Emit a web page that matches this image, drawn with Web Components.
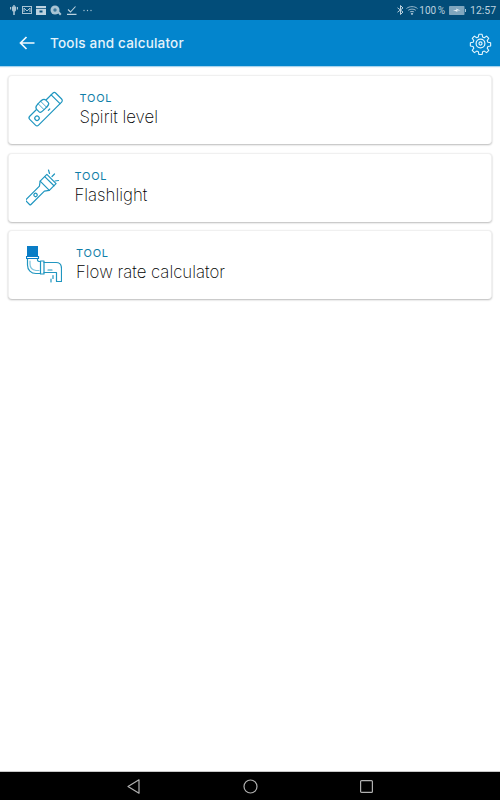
<!DOCTYPE html>
<html><head><meta charset="utf-8"><style>
html,body{margin:0;padding:0;height:100%;background:#fff;font-family:Inter,sans-serif}
body{width:500px;height:800px;overflow:hidden;display:flex;flex-direction:column}
</style></head><body>
<status-bar></status-bar>
<app-bar title="Tools and calculator"></app-bar>
<tool-list>
<tool-card name="Spirit level" gap="16.5" icon="level"></tool-card>
<tool-card name="Flashlight" gap="14.5" icon="torch"></tool-card>
<tool-card name="Flow rate calculator" gap="14" icon="pipe"></tool-card>
</tool-list>
<nav-bar></nav-bar>
<script>
const def=(n,html)=>customElements.define(n,class extends HTMLElement{connectedCallback(){if(this.shadowRoot)return;const s=this.attachShadow({mode:'open'});s.innerHTML=typeof html==='function'?html(this):html;}});
const C='#2096c0';
const icons={
level:`<svg width="37" height="40" viewBox="25 90 37 40" fill="none" stroke="${C}" stroke-width="1.200" stroke-linejoin="round" stroke-linecap="round"><g transform="translate(44.5 109) rotate(-45)"><rect x="-18.500" y="-6" width="37" height="12.500" rx="2.2"/><path d="M-6.500 -6 C-6.500 -8.800 -4 -9 0 -9 C4 -9 6.500 -8.800 6.500 -6 L6.500 -2.500 C6.500 -.5 4 -.5 0 -.5 C-4 -.5 -6.500 -.5 -6.500 -2.500 Z" fill="#fff"/><path d="M-1.500 -9V-.5M2 -9V-.5" stroke-width=".8"/><circle cx="-12.500" cy="0.500" r="2.200"/><path d="M14 -6V6.500M1 3H3"/></g></svg>`,
torch:`<svg width="34" height="40" viewBox="25 168 34 40" fill="none" stroke="${C}" stroke-width="1.200" stroke-linejoin="round" stroke-linecap="round"><g transform="translate(39.500 190) rotate(-45)"><path d="M-17 -3.500H2L6 -6.500H15.500V6.500H6L2 3.500H-17Q-18 3.500 -18 2.500V-2.500Q-18 -3.500 -17 -3.500Z"/><path d="M12.500 -6.500V6.500M6 -6.500V6.500"/><circle cx="-7" cy="0" r="1.700"/></g><path d="M47.500 170L48.500 173.500M53.500 174L51 176.500M57.500 180.500L54 181"/></svg>`,
pipe:`<svg width="36" height="40" viewBox="25 246 36 40" fill="none" stroke="${C}" stroke-width="1.200" stroke-linejoin="round" stroke-linecap="round"><rect x="26" y="247" width="11" height="10" fill="#0a7dc6" stroke="none"/><path d="M25.500 257.500H37.500V259.500H25.500Z" stroke="#0a7dc6"/><path d="M26.500 260V266C26.500 271 30 274.500 35 274.500H39M36.500 260V261C36.500 262 37.500 262.500 39 262.500"/><path d="M29 262V265C29 268.500 31.500 271 35 271.500H38" stroke="#7cc4dc"/><rect x="39.500" y="262" width="3.500" height="13"/><path d="M43 263.500H55M43 273.500H55M47 271H51"/><path d="M55 263.500C58.500 263.500 60.500 266 60.500 269.500V282.500H55.500V273.500"/><path d="M52 276.500V279.500M50 280V283"/></svg>`
};
def('status-bar',`<style>
:host{display:flex;flex:none;height:20px;background:#024d79;color:#bcd2df;font:10px Roboto,sans-serif;align-items:center;padding:0 3px 0 10px;justify-content:space-between}
.g{display:flex;align-items:center}
svg{display:block}
</style>
<div class="g" style="gap:4px">
<svg width="8" height="10" viewBox="0 0 8 10" fill="#a9c4d4"><path d="M3.300 0h1.400v1.500H6V5C6 6 5 6.500 4.800 6.500V10H3.200V6.500C3 6.500 2 6 2 5V1.500h1.300z M0 2h1.200v2.500H0zM6.800 2H8v2.500H6.800z"/></svg>
<svg width="10" height="8" viewBox="0 0 10 8" fill="none" stroke="#a9c4d4"><rect x=".5" y=".5" width="9" height="7"/><path d="M2 6V2L5 5 8 2V6"/></svg>
<svg width="10" height="9" viewBox="0 0 10 9" fill="#bcd2df"><path fill-rule="evenodd" d="M0 0h10v2H0zM0 2.800h10V9H0zM3.500 4.500v2h3v-2z"/></svg>
<svg width="12" height="11" viewBox="0 0 12 11" fill="#a9c4d4"><circle cx="5" cy="5" r="4.500"/><path d="M8 5l3.500 4-1.500 1.500L7 7z"/><circle cx="5" cy="5" r="1.700" fill="#3f7a9c"/></svg>
<svg width="10" height="9" viewBox="0 0 10 9" fill="none" stroke="#bcd2df" stroke-width="1.100" style="margin-left:1px"><path d="M1 3.500L3.500 6 8.500 .5M0 8.400h9.500"/></svg>
<svg width="9" height="3" viewBox="0 0 9 3" fill="#a9c4d4" style="margin-left:2px"><circle cx="1" cy="1.500" r=".7"/><circle cx="4.500" cy="1.500" r=".7"/><circle cx="8" cy="1.500" r=".7"/></svg>
</div>
<div class="g">
<svg width="7" height="10" viewBox="0 0 7 10" fill="none" stroke="#bcd2df" style="margin-right:2px"><path d="M.5 2.800L6 7 3.500 9.500V.5L6 3 .5 7.200"/></svg>
<svg width="12" height="9" viewBox="0 0 12 9" fill="none" stroke="#bcd2df" stroke-width=".8"><path d="M.5 2.500C3.500 0 8.500 0 11.500 2.500M2.200 4.300C4.300 2.700 7.700 2.700 9.800 4.300M3.900 6C5 5.200 7 5.200 8.100 6"/><circle cx="6" cy="7.800" r=".7" fill="#bcd2df"/></svg>
<span style="margin-left:1px;word-spacing:-1px">100 %</span>
<svg width="17" height="9" viewBox="0 0 17 9" style="margin-left:4px" fill="#a9c6d8"><rect width="15.500" height="9" rx=".8" fill="#7fa6be"/><rect x="16" y="3" width="1" height="3"/><path d="M4 4h3.500l-.5-1.500L11.500 4.500H8l.5 1.500z" fill="#e4eef4"/></svg>
<span style="margin-left:4px;font-size:10.500px;width:27px">12:57</span>
</div>`);
def('app-bar',h=>`<style>
:host{display:flex;flex:none;height:46px;background:#0385cd;color:#e4f3fb;align-items:center;box-shadow:0 1px 1px rgba(3,133,205,.35);position:relative}
.back{margin-left:19px;width:16px;height:14px;display:block}
.t{margin-left:15px;font:500 13.500px Inter,sans-serif;letter-spacing:.2px;flex:1}
.gear{margin-right:8px;display:block}
</style>
<svg class="back" viewBox="0 0 16 14" fill="none" stroke="#f2fafe" stroke-width="1.700"><path d="M15.500 7H1.500M7.500 1L1.500 7 7.500 13"/></svg>
<div class="t">${h.getAttribute('title')}</div>
<svg class="gear" width="23" height="23" viewBox="0 0 24 24" fill="none" stroke="#e6f6fd" stroke-width="1.250" stroke-linejoin="round"><path d="M10.200 1.500h3.600l.6 3.100 1.900.8 2.600-1.800 2.500 2.500-1.800 2.600.8 1.900 3.100.6v3.600l-3.100.6-.8 1.900 1.800 2.600-2.500 2.500-2.600-1.800-1.900.8-.6 3.100h-3.600l-.6-3.100-1.900-.8-2.600 1.800-2.500-2.500 1.800-2.600-.8-1.900-3.100-.6v-3.600l3.100-.6.8-1.900-1.800-2.600 2.500-2.500 2.600 1.800 1.900-.8z" transform="translate(12 12) scale(.92) translate(-12 -12)"/><circle cx="12" cy="12" r="4.600"/><circle cx="12" cy="12" r="1.600"/></svg>`);
def('tool-list',`<style>:host{display:flex;flex-direction:column;flex:1;gap:8.500px;padding:9px 8px 0}</style><slot></slot>`);
def('tool-card',h=>`<style>
:host{display:flex;height:69px;box-sizing:border-box;align-items:center;background:#fff;border-radius:4px;padding-left:17px;border:1px solid #f0f0f0;border-bottom:0;box-shadow:0 1px 2px rgba(0,0,0,.28)}
svg{display:block;flex:none}
.x{margin-left:${h.getAttribute('gap')}px}
.k{font:400 11px/13px Inter,sans-serif;color:#0f7ea8;letter-spacing:.75px}
.n{font:250 16.800px/22px Inter,sans-serif;color:#000;margin-top:1px}
</style>${icons[h.getAttribute('icon')]}<div class="x"><div class="k">TOOL</div><div class="n">${h.getAttribute('name')}</div></div>`);
def('nav-bar',`<style>
:host{display:flex;flex:none;height:28px;background:#000;border-top:1px solid #c8c8c8;align-items:center;justify-content:space-between;padding:0 127px}
svg{display:block}
</style>
<svg width="13" height="15" viewBox="0 0 13 15" fill="none" stroke="#b0b0b0" stroke-width="1.200" stroke-linejoin="round"><path d="M12 .8V14.200L1 7.500Z"/></svg>
<svg width="15" height="15" viewBox="0 0 15 15" fill="none" stroke="#b0b0b0" stroke-width="1.200"><circle cx="7.500" cy="7.500" r="6.500"/></svg>
<svg width="13" height="13" viewBox="0 0 13 13" fill="none" stroke="#b0b0b0" stroke-width="1.200"><rect x=".6" y=".6" width="11.800" height="11.800" rx="1"/></svg>`);
</script>
</body></html>
